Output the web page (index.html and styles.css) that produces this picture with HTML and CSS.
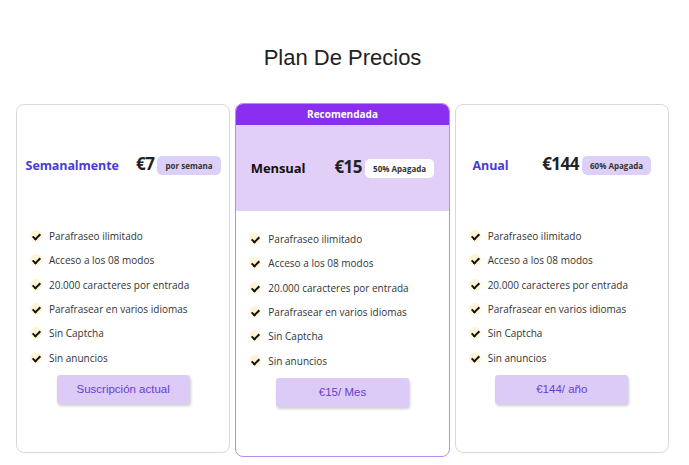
FILE: index.html
```html
<!DOCTYPE html>
<html lang="es">
  <head>
    <meta charset="UTF-8" />
    <meta name="viewport" content="width=device-width, initial-scale=1.0" />
    <title>Plan De Precios</title>
    <link rel="stylesheet" href="styles.css">
  </head>
  <body>
    <div class="pricing">
      <h1>Plan De Precios</h1>

      <div class="plans">
        <!-- Semanal -->
        <div class="plan">
          <div class="plan-head">
            <span class="plan-name">Semanalmente</span>
            <span class="plan-price">
              <b>€7</b>
              <span class="badge">por semana</span>
            </span>
          </div>
          <ul class="features">
            <li><span class="check"></span>Parafraseo ilimitado</li>
            <li><span class="check"></span>Acceso a los 08 modos</li>
            <li><span class="check"></span>20.000 caracteres por entrada</li>
            <li><span class="check"></span>Parafrasear en varios idiomas</li>
            <li><span class="check"></span>Sin Captcha</li>
            <li><span class="check"></span>Sin anuncios</li>
          </ul>
          <button type="button">Suscripción actual</button>
        </div>

        <!-- Mensual -->
        <div class="plan featured">
          <div class="ribbon">Recomendada</div>
          <div class="plan-head">
            <span class="plan-name">Mensual</span>
            <span class="plan-price">
              <b>€15</b>
              <span class="badge">50% Apagada</span>
            </span>
          </div>
          <ul class="features">
            <li><span class="check"></span>Parafraseo ilimitado</li>
            <li><span class="check"></span>Acceso a los 08 modos</li>
            <li><span class="check"></span>20.000 caracteres por entrada</li>
            <li><span class="check"></span>Parafrasear en varios idiomas</li>
            <li><span class="check"></span>Sin Captcha</li>
            <li><span class="check"></span>Sin anuncios</li>
          </ul>
          <button type="button">€15/ Mes</button>
        </div>

        <!-- Anual -->
        <div class="plan">
          <div class="plan-head">
            <span class="plan-name">Anual</span>
            <span class="plan-price">
              <b>€144</b>
              <span class="badge">60% Apagada</span>
            </span>
          </div>
          <ul class="features">
            <li><span class="check"></span>Parafraseo ilimitado</li>
            <li><span class="check"></span>Acceso a los 08 modos</li>
            <li><span class="check"></span>20.000 caracteres por entrada</li>
            <li><span class="check"></span>Parafrasear en varios idiomas</li>
            <li><span class="check"></span>Sin Captcha</li>
            <li><span class="check"></span>Sin anuncios</li>
          </ul>
          <button type="button">€144/ año</button>
        </div>
      </div>
    </div>
  </body>
</html>
```

FILE: styles.css
```css
body {
  font-family: "Open Sans", sans-serif;
  background-color: #fff;
  color: #333;
  margin: 0;
  padding: 0;
}

.pricing {
  padding: 0 20px 0 16px;
}

h1 {
  font-family: "Liberation Sans", Arial, sans-serif;
  font-weight: normal;
  font-size: 22px;
  color: #222;
  text-align: center;
  margin: 0;
  padding-top: 45px;
  height: 59px;
}

.plans {
  display: flex;
  align-items: flex-start;
  gap: 5px;
}

.plan {
  flex: 1;
  border: 1px solid #d9d9d9;
  border-radius: 8px;
  padding-top: 17px;
  padding-bottom: 48px;
  background-color: #fff;
}

.plan.featured {
  border-color: #b88de9;
  padding-top: 0;
  margin-top: -1px;
  padding-bottom: 49px;
  overflow: hidden;
}

.ribbon {
  background-color: #8a2ff0;
  color: #fff;
  font-size: 10px;
  font-weight: bold;
  text-align: center;
  height: 21px;
  line-height: 20px;
}

.plan-head {
  display: flex;
  justify-content: space-around;
  align-items: center;
  height: 20px;
  padding: 33px 0;
}

.featured .plan-head {
  background-color: #e1cff8;
}

.plan-name {
  font-size: 12.5px;
  font-weight: bold;
  color: #4a3bd4;
  letter-spacing: -0.1px;
}

.featured .plan-name {
  color: #111;
  font-size: 13px;
}

.plan-price {
  display: flex;
  align-items: center;
  gap: 3px;
}

.plan-price b {
  font-size: 17px;
  color: #222;
  letter-spacing: -0.5px;
  margin-top: -3px;
}

.badge {
  background-color: #ddd0f8;
  border-radius: 5px;
  font-size: 8px;
  font-weight: bold;
  color: #333;
  padding: 0 8px;
  height: 19px;
  line-height: 19px;
}

.featured .badge {
  background-color: #fff;
}

.features {
  list-style: none;
  margin: 0;
  padding: 16px 0 0 13px;
}

.features li {
  display: flex;
  align-items: center;
  gap: 7px;
  height: 24.3px;
  font-size: 10px;
  color: #333;
}

.check {
  width: 12px;
  height: 12px;
  border-radius: 50%;
  background-color: #fff4d6;
  position: relative;
  flex-shrink: 0;
}

.check::after {
  content: "";
  position: absolute;
  left: 4px;
  top: 2px;
  width: 3px;
  height: 6px;
  border: solid #111;
  border-width: 0 2px 2px 0;
  transform: rotate(45deg);
}

button {
  display: block;
  margin: 5px auto 0;
  width: 133px;
  height: 29px;
  border: none;
  border-radius: 3px;
  background-color: #dccbf7;
  color: #6a3dcc;
  font-family: "Liberation Sans", Arial, sans-serif;
  font-size: 11.5px;
  box-shadow: 1px 2px 3px rgba(0, 0, 0, 0.2);
  cursor: pointer;
}

button:hover {
  background-color: #d0bbf4;
}
```
